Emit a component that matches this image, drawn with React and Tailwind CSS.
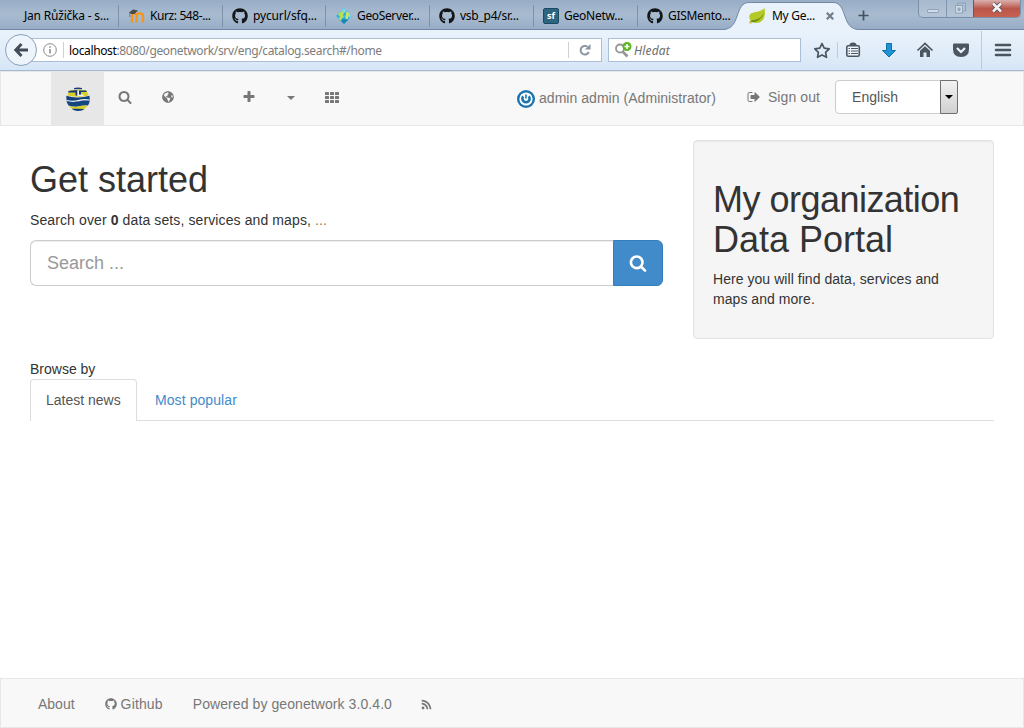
import React from "react";
import { FaGithub, FaRss, FaGlobeAmericas } from "react-icons/fa";

const SEARCH =
  "M1216 832q0-185-131.5-316.5t-316.5-131.5-316.5 131.5-131.5 316.5 131.5 316.5 316.5 131.5 316.5-131.5 131.5-316.5zm512 832q0 52-38 90t-90 38q-54 0-90-38l-343-342q-179 124-399 124-143 0-273.5-55.5t-225-150-150-225-55.5-273.5 55.5-273.5 150-225 225-150 273.5-55.5 273.5 55.5 225 150 150 225 55.5 273.5q0 220-124 399l343 343q37 37 37 90z";
const PLUS =
  "M1600 736v192q0 40-28 68t-68 28h-416v416q0 40-28 68t-68 28h-192q-40 0-68-28t-28-68v-416h-416q-40 0-68-28t-28-68v-192q0-40 28-68t68-28h416v-416q0-40 28-68t68-28h192q40 0 68 28t28 68v416h416q40 0 68 28t28 68z";
const SIGN_OUT =
  "M704 1440q0 4 1 20t.5 26.5-3 23.5-10 19.5-20.5 6.5h-320q-119 0-203.5-84.5t-84.5-203.5v-704q0-119 84.5-203.5t203.5-84.5h320q13 0 22.5 9.5t9.5 22.5q0 4 1 20t.5 26.5-3 23.5-10 19.5-20.5 6.5h-320q-66 0-113 47t-47 113v704q0 66 47 113t113 47h312l11.5 1 11.5 3 8 5.5 7 9 2 13.5zm928-544q0 26-19 45l-544 544q-19 19-45 19t-45-19-19-45v-288h-448q-26 0-45-19t-19-45v-384q0-26 19-45t45-19h448v-288q0-26 19-45t45-19 45 19l544 544q19 19 19 45z";

function Glyph({ d, className }) {
  return (
    <svg viewBox="0 0 1792 1792" className={className} fill="currentColor">
      <path d={d} />
    </svg>
  );
}

function MoodleIcon() {
  return (
    <svg viewBox="0 0 16 16" className="size-4">
      <path d="M3 14.500V8q0-2.500 2.300-2.500T7.600 8v6.500M7.600 14.500V8q0-2.500 3-2.500 3.400 0 3.400 2.500v6.500" fill="none" stroke="#f3961c" strokeWidth="2.300" />
      <path d="M0 4.500l4-3 5 1L5.500 6H2z" fill="#4b4b4b" />
      <path d="M.8 4.500V9" stroke="#6b6b6b" strokeWidth=".8" />
    </svg>
  );
}

function GeoServerIcon() {
  return (
    <svg viewBox="0 0 16 16" className="size-4">
      <path d="M8 0l8 8-8 8-8-8z" fill="#2fb3d6" />
      <path d="M8 0l3 3-3 2-3-2zM13 5l3 3-3 2-1-2z" fill="#7fd6e8" />
      <path d="M8 16l-4-4 4-1 4 1z" fill="#1a86b8" />
      <path d="M3 5l3-2 2 2-1 2 1 2-2 1-1 3-2-2 1-3-2-1z" fill="#b9de5c" />
      <path d="M10 4l2 0 2 3-2 1v3l-2 0-1-3 1-1z" fill="#c9e36a" />
    </svg>
  );
}

function SfIcon() {
  return (
    <span className="flex size-4 items-center justify-center rounded-[2px] border border-[#184a60] bg-[#2d6580] pb-px font-['Open_Sans',sans-serif] text-[9px] font-bold leading-none text-white">
      sf
    </span>
  );
}

const github = <FaGithub className="size-4 text-[#14171a]" />;
const TABS = [
  { icon: null, label: "Jan Růžička - s...", w: "w-[119px] pl-[24px]", t: "tracking-[-0.2px]" },
  { icon: <MoodleIcon />, label: "Kurz: 548-...", w: "w-[104px] pl-[10px]", t: "tracking-[-0.4px]" },
  { icon: github, label: "pycurl/sfq...", w: "w-[103px] pl-[9px]", t: "tracking-[-0.15px]" },
  { icon: <GeoServerIcon />, label: "GeoServer...", w: "w-[104px] pl-[10px]", t: "tracking-[-0.35px]" },
  { icon: github, label: "vsb_p4/sr...", w: "w-[104px] pl-[9px]", t: "tracking-[-0.25px]" },
  { icon: <SfIcon />, label: "GeoNetw...", w: "w-[104px] pl-[9px]", t: "tracking-[-0.25px]" },
  { icon: github, label: "GISMento...", w: "w-[97px] pl-[9px] border-r-0", t: "tracking-[-0.3px]" },
];

function WindowButtons() {
  return (
    <div className="absolute right-[3px] top-0 flex h-[18px] w-[103px] overflow-hidden rounded-b-[5px] border border-t-0 border-[#7b8fa8] text-white">
      <div className="flex w-[28px] items-end justify-center border-r border-[#8296ae] bg-white/15 pb-[4px]">
        <span className="h-[4px] w-[12px] rounded-[1px] border border-[#8fa2b7] bg-[#d2dce6]" />
      </div>
      <div className="flex w-[27px] items-center justify-center border-r border-[#6a5560] bg-white/15 pb-[2px]">
        <svg viewBox="0 0 12 12" className="size-3" fill="none">
          <path d="M3.500 3V1h8v8h-2" stroke="#8fa2b7" strokeWidth="1" />
          <rect x="1.500" y="3.500" width="7" height="7.500" stroke="#8fa2b7" fill="#d2dce6" />
          <rect x="4" y="6" width="2" height="2.500" stroke="#8fa2b7" fill="#a3b4c7" />
        </svg>
      </div>
      <div className="flex flex-1 items-center justify-center bg-linear-to-b from-[#d8b0ae] via-[#b9564c] via-50% to-[#c8604f] pb-[2px]">
        <svg viewBox="0 0 12 11" className="h-[11px] w-3">
          <path d="M2 1.500l8 8M10 1.500l-8 8" stroke="#5a4e5c" strokeWidth="4.200" />
          <path d="M2 1.500l8 8M10 1.500l-8 8" stroke="#f4f4f4" strokeWidth="2.500" />
        </svg>
      </div>
    </div>
  );
}

function TabStrip() {
  return (
    <div className="relative flex h-[30px] shrink-0 border-b border-[#6f87a3] bg-linear-to-b from-[#98adc6] via-[#a8bbd0] to-[#98adc6] text-[12px] text-black">
      {TABS.map((t) => (
        <div key={t.label} className="flex h-[30px] shrink-0 items-center">
          <div className={"mt-[2px] flex h-[22px] items-center gap-[5px] border-r border-[#7d92a9] whitespace-nowrap " + t.w}>
            {t.icon}
            <span className={"leading-4 " + t.t}>{t.label}</span>
          </div>
        </div>
      ))}
      <div className="relative flex h-[30px] w-[116px] shrink-0 items-center pl-[14px]">
        <svg viewBox="0 0 116 30" className="absolute left-0 top-0 h-[30px] w-[116px] overflow-visible">
          <path d="M-12 29.500C6 29.500-1 2.500 14 2.500H98C113 2.500 106 29.500 124 29.500V30.500H-12z" fill="#e9f2fb" />
          <path d="M-12 29.500C6 29.500-1 2.500 14 2.500H98C113 2.500 106 29.500 124 29.500" fill="none" stroke="#7088a5" />
        </svg>
        <svg viewBox="0 0 16 16" className="relative mt-[2px] size-4">
          <path d="M15.500 0C16.500 5 16.500 14.500 8 15 2 15.300-.500 11 .500 7.500 2 3 12 5 15.500 0z" fill="#b5ca26" />
          <path d="M1 14c8 1 13-4 14-10-1.500 4-4 6.500-8 7.500-3 .7-5 .5-6 2.500z" fill="#698e16" />
          <path d="M0 13.500q2-.500 3 2H.500z" fill="#e3b72b" />
        </svg>
        <span className="relative ml-[7px] mt-[2px] leading-4 tracking-[-0.3px]">My Ge...</span>
        <svg viewBox="0 0 8 8" className="absolute left-[91px] top-[12px] size-2">
          <path d="M.8 .8l6.400 6.400M7.200 .8L.8 7.200" stroke="#6e7c8c" strokeWidth="2.200" />
        </svg>
      </div>
      <svg viewBox="0 0 12 12" className="ml-[7px] mt-[10px] size-[11px]">
        <path d="M6 .5v11M.5 6h11" stroke="#46525f" strokeWidth="1.900" />
      </svg>
      <WindowButtons />
    </div>
  );
}

function ToolbarIcons() {
  return (
    <svg viewBox="0 0 223 40" className="h-[40px] w-[223px] shrink-0">
      <path d="M21 13.500l2.200 4.600 5 .7-3.600 3.500.9 5-4.500-2.400-4.500 2.400.9-5-3.600-3.500 5-.7z" fill="none" stroke="#4c5661" strokeWidth="1.700" strokeLinejoin="round" />
      <path d="M36.500 12v16M180.500 1v38" stroke="#bccbdb" />
      <rect x="45.800" y="15.800" width="12.500" height="10.500" rx="1.500" fill="#eef5fc" stroke="#4c5661" strokeWidth="1.600" />
      <path d="M48.500 15q0-2.500 3.500-2.500t3.500 2.500z" fill="#4c5661" />
      <path d="M47.500 18.500h1.500M50 18.500h7M47.500 21h1.500M50 21h7M47.500 23.500h1.500M50 23.500h7" stroke="#4c5661" strokeWidth="1.100" />
      <path d="M85.500 13.500h5v7h4l-6.500 6.500-6.500-6.500h4z" fill="#1d94d6" stroke="#116da5" />
      <path d="M116.500 20.500l7.500-7 7.500 7" fill="none" stroke="#4c5661" strokeWidth="1.700" />
      <path d="M119 20.800l5-4.500 5 4.500V27h-3.500v-4.500h-3V27H119z" fill="#4c5661" />
      <path d="M153 13.500h14q1 0 1 1v4.500q0 8-8 8t-8-8v-4.500q0-1 1-1z" fill="#4c5661" />
      <path d="M156 18l4 4 4-4" fill="none" stroke="#eef5fc" strokeWidth="2.200" />
      <path d="M195 15h14M195 20h14M195 25h14" stroke="#4c5661" strokeWidth="2.600" strokeLinecap="round" />
    </svg>
  );
}

function Toolbar() {
  return (
    <div className="flex h-[41px] shrink-0 items-center border-b border-[#a3bad3] bg-linear-to-b from-[#eaf3fc] to-[#d7e6f6]">
      <div className="z-10 ml-[5px] flex size-8 shrink-0 items-center justify-center rounded-full border border-[#8ba0b8] bg-[#edf4fb]">
        <svg viewBox="0 0 14 14" className="size-[14px]" fill="none" stroke="#414c58" strokeWidth="2.900">
          <path d="M7.500 1L1.800 7l5.700 6M2 7h12" />
        </svg>
      </div>
      <div className="-ml-[6px] flex h-[24px] w-[571px] shrink-0 items-center border border-[#a9bfd7] bg-white">
        <svg viewBox="0 0 14 14" className="ml-[11px] size-[14px]" fill="none" stroke="#8a8a8a">
          <circle cx="7" cy="7" r="6.300" />
          <path d="M7 6v4.500M7 3.200v1.600" strokeWidth="1.500" />
        </svg>
        <span className="ml-[6px] h-4 w-px bg-[#d0d0d0]" />
        <span className="ml-[5px] mt-[2px] whitespace-nowrap text-[12px] leading-4 tracking-[-0.36px] text-[#7d7d7d]">
          <span className="text-black">localhost</span>:8080/geonetwork/srv/eng/catalog.search#/home
        </span>
        <span className="ml-auto h-4 w-px bg-[#d0d0d0]" />
        <svg viewBox="0 0 12 12" className="ml-[10px] mr-[10px] size-3">
          <path d="M9.800 8A4.300 4.300 0 1 1 8.500 2.800" fill="none" stroke="#87939f" strokeWidth="1.900" />
          <path d="M11.500 0v5.500H6z" fill="#87939f" />
        </svg>
      </div>
      <div className="ml-[6px] flex h-[24px] w-[193px] shrink-0 items-center border border-[#a9bfd7] bg-white">
        <svg viewBox="0 0 18 16" className="ml-[5px] h-4 w-[18px]">
          <circle cx="6" cy="6.500" r="4" fill="none" stroke="#969696" strokeWidth="1.800" />
          <path d="M8.500 9.500l5 5" stroke="#969696" strokeWidth="2.600" />
          <circle cx="13" cy="4.500" r="4.500" fill="#5cb522" />
          <path d="M13 2v5M10.500 4.500h5" stroke="#fff" strokeWidth="1.500" />
        </svg>
        <span className="ml-[2px] mt-[2px] text-[12px] italic leading-4 tracking-[0.15px] text-[#6d6d6d]">Hledat</span>
      </div>
      <ToolbarIcons />
    </div>
  );
}

function CatalogLogo() {
  return (
    <svg viewBox="0 0 24 24" className="h-[24px] w-[24px]">
      <path d="M8 1q4-1.200 8 0v1.300H8z" fill="#1d3c73" />
      <path d="M3 3.500Q12 1.800 20.500 3.500l2 5Q12 11 1.500 8.500z" fill="#d8cf28" />
      <path d="M2.500 4Q8 2.800 11.500 3.300V8.500H9.500V5.500Q6 5.500 2.200 5.500z" fill="#143d78" />
      <path d="M11.500 3.500v5.500h6V7.500h-4.500V3.500z" fill="#f3f3ee" />
      <path d="M13 3.500h7l1 1.500h-6v2.500h-2z" fill="#143d78" />
      <path d="M.3 8.800q6 2 11.700 1.700 6-.3 11.500-1.700l.3 5q-6-1-11 .7-6 1.500-12.300-.5z" fill="#12407e" />
      <path d="M.3 12.700Q6 14.500 12 13q6-1.500 11.600-.5v1.300Q17 13 12 14.600 6 15.800.5 14z" fill="#f1f1ed" />
      <path d="M.5 14q6 1.800 11.500.6 6-1.800 11.700-.8-.2 3-1.700 4.700-5-.5-10 1-5 .8-9.500-1Q1 16.500.5 14z" fill="#154681" />
      <path d="M3 18.700q4.500 1.400 9 .700 5-1.200 9-.9-.5 2-2.500 3.500-6 1.200-12 0Q4 20.500 3 18.700z" fill="#d8cf28" />
      <path d="M6 21.800q6-.3 12.500.2-2 1.900-6.500 1.900T6 21.800z" fill="#143d78" />
    </svg>
  );
}

function Navbar() {
  return (
    <nav className="flex h-[55px] shrink-0 items-center border border-[#e7e7e7] bg-[#f8f8f8] pb-px text-[14px] leading-5 text-[#777]">
      <div className="-mb-px ml-[50px] flex h-[53px] w-[53px] items-center justify-center bg-[#e7e7e7]">
        <CatalogLogo />
      </div>
      <Glyph d={SEARCH} className="ml-[14px] mb-[2px] size-[14px]" />
      <FaGlobeAmericas className="ml-[30px] mb-[2px] size-[12px]" />
      <Glyph d={PLUS} className="ml-[68px] mb-[2px] size-[14px]" />
      <svg viewBox="0 0 8 4" className="ml-[31px] h-1 w-2" fill="currentColor">
        <path d="M0 0h8L4 4z" />
      </svg>
      <svg viewBox="0 0 14 11" className="ml-[30px] mb-[2px] h-[11px] w-[14px]" fill="currentColor">
        {[0, 4, 8].map((y) =>
          [0, 5, 10].map((x) => <rect key={x + "-" + y} x={x} y={y} width="4" height="3" rx=".5" />)
        )}
      </svg>
      <svg viewBox="0 0 18 18" className="ml-[178px] mt-px size-[18px]">
        <circle cx="9" cy="9" r="9" fill="#1a75ae" />
        <circle cx="9" cy="9" r="6.600" fill="#fff" />
        <path d="M6.300 6.300A3.600 3.600 0 1 0 11.700 6.300" fill="none" stroke="#1a75ae" strokeWidth="2.600" />
        <path d="M9 4.500v4" stroke="#1a75ae" strokeWidth="1.600" />
      </svg>
      <span className="ml-[4px] whitespace-nowrap tracking-[0.04px]">admin admin (Administrator)</span>
      <Glyph d={SIGN_OUT} className="ml-[31px] mb-[2px] size-[14px]" />
      <span className="ml-[7px] mb-[2px] whitespace-nowrap tracking-[0.1px]">Sign out</span>
      <div className="ml-[15px] mb-[2px] flex h-[34px] w-[123px] items-stretch rounded-[4px] border border-[#ccc] bg-white text-[#555]">
        <span className="flex-1 pl-4 leading-8">English</span>
        <span className="-my-px -mr-px flex w-[18px] items-center justify-center rounded-r-[2px] border border-[#707070] bg-linear-to-b from-[#f2f2f2] to-[#d0d0d0]">
          <svg viewBox="0 0 8 4" className="h-1 w-2">
            <path d="M0 0h8L4 4z" fill="#000" />
          </svg>
        </span>
      </div>
    </nav>
  );
}

function Main() {
  return (
    <main className="flex-1 px-[30px] pt-[14px] text-[14px] leading-5 text-[#333]">
      <div className="flex h-[219px]">
        <section className="w-[633px]">
          <h1 className="mt-[20px] text-[36px] leading-10">Get started</h1>
          <p className="mt-[10px] tracking-[0.11px]">
            Search over <b>0</b> data sets, services and maps, <span className="text-[#8f7a5c]">...</span>
          </p>
          <div className="mt-[10px] flex h-[46px]">
            <div className="flex-1 rounded-l-[6px] border border-r-0 border-[#ccc] pl-4 text-[18px] leading-[44px] text-[#999] shadow-[inset_0_1px_1px_rgba(0,0,0,0.075)]">
              Search ...
            </div>
            <div className="flex w-[50px] items-center justify-center rounded-r-[6px] border border-[#357ebd] bg-[#428bca] text-white">
              <Glyph d={SEARCH} className="size-[18px]" />
            </div>
          </div>
        </section>
        <aside className="ml-[30px] h-[199px] w-[301px] rounded-[4px] border border-[#e3e3e3] bg-[#f5f5f5] px-[19px] pt-[39px] shadow-[inset_0_1px_1px_rgba(0,0,0,0.05)]">
          <h1 className="whitespace-nowrap text-[36px] leading-10">
            <span className="tracking-[-0.52px]">My organization</span>
            <br />
            <span>Data Portal</span>
          </h1>
          <p className="mt-[9px] whitespace-nowrap tracking-[0.05px]">
            Here you will find data, services and
            <br />
            maps and more.
          </p>
        </aside>
      </div>
      <p>Browse by</p>
      <div className="flex h-[42px] border-b border-[#ddd]">
        <div className="h-[42px] w-[107px] rounded-t-[4px] border border-b-0 border-[#ddd] bg-white pl-[15px] leading-[41px] text-[#555]">Latest news</div>
        <div className="pl-[18px] leading-[43px] tracking-[0.08px] text-[#428bca]">Most popular</div>
      </div>
    </main>
  );
}

function Footer() {
  return (
    <footer className="flex h-[50px] shrink-0 items-center whitespace-nowrap border border-[#e7e7e7] bg-[#f8f8f8] pl-[37px] pb-px pt-[3px] text-[14px] leading-5 text-[#777]">
      <span>About</span>
      <FaGithub className="ml-[30px] size-3" />
      <span className="ml-[4px] tracking-[0.15px]">Github</span>
      <span className="ml-[30px] tracking-[0.08px]">Powered by geonetwork 3.0.4.0</span>
      <FaRss className="ml-[29px] size-[11px]" />
    </footer>
  );
}

export default function App() {
  return (
    <div className="flex h-[728px] w-[1024px] flex-col overflow-hidden bg-white font-['Liberation_Sans',Arial,sans-serif]">
      <header className="shrink-0 font-['Noto_Sans','Open_Sans',sans-serif]">
        <TabStrip />
        <Toolbar />
      </header>
      <Navbar />
      <Main />
      <Footer />
    </div>
  );
}
